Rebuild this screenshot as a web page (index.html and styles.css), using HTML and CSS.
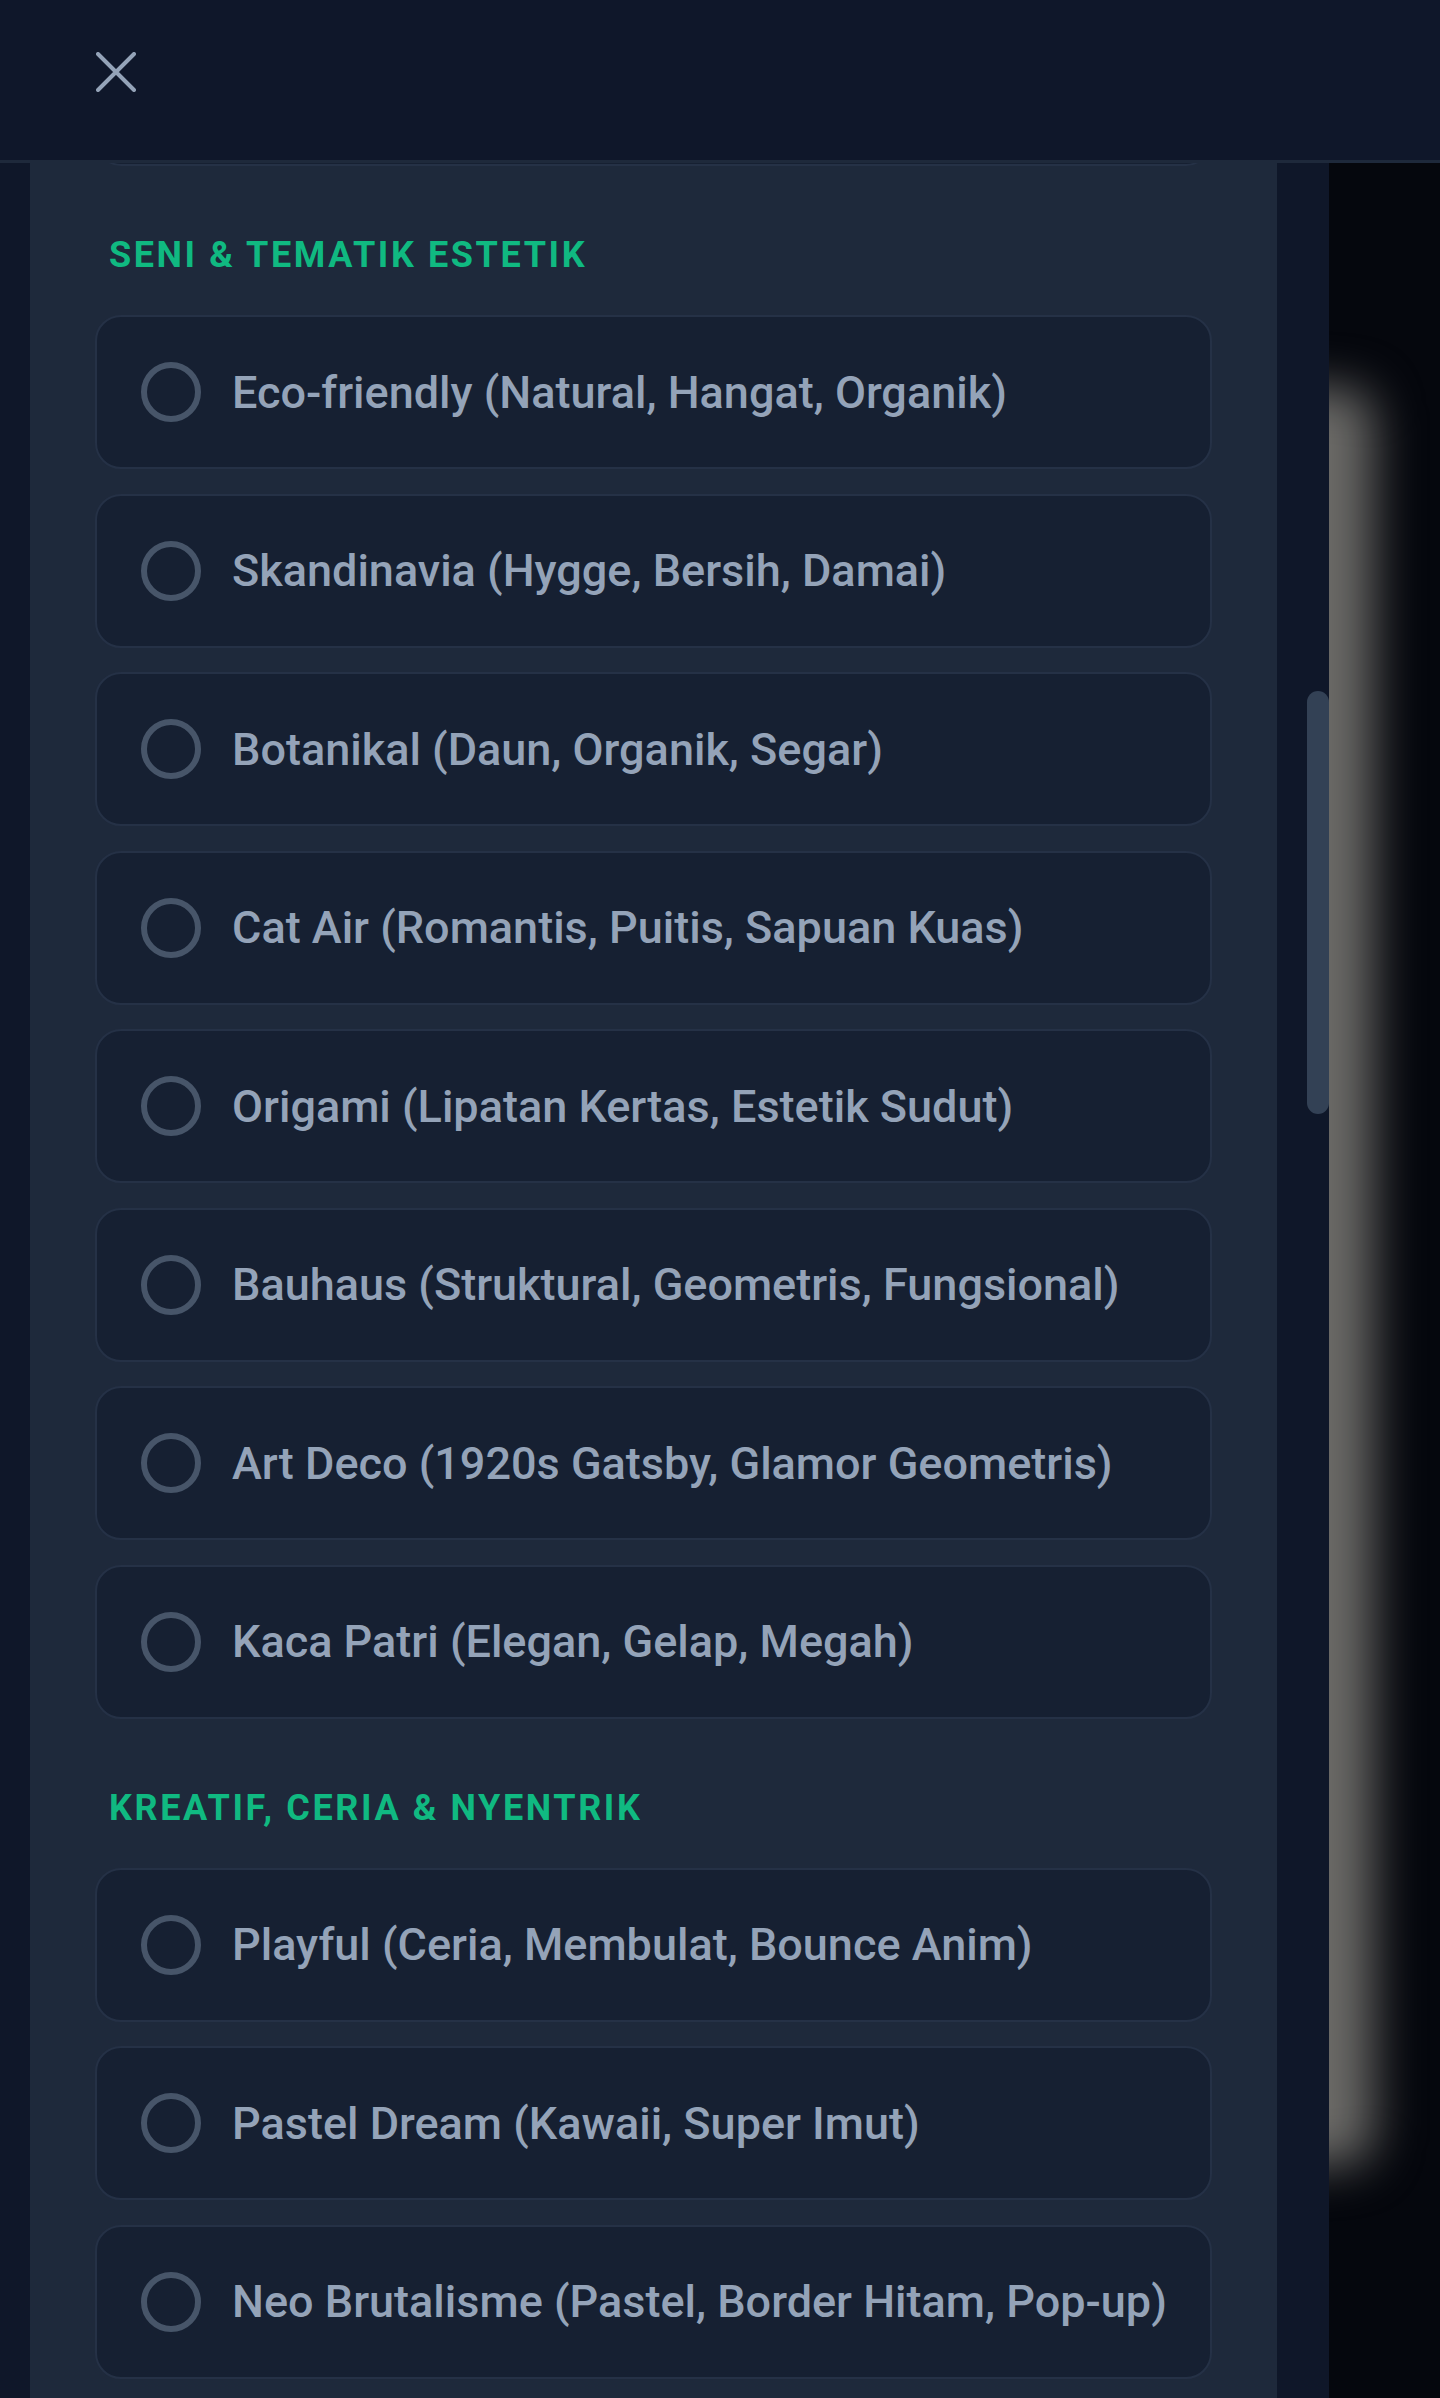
FILE: index.html
```html
<!DOCTYPE html>
<html lang="id">
<head>
    <meta charset="UTF-8">
    <meta name="viewport" content="width=device-width, initial-scale=1.0">
    <title>Pilih Tema</title>
    <link rel="stylesheet" href="styles.css">
</head>
<body>
    <div class="app">
        <header class="topbar">
            <button class="close-btn" aria-label="Tutup">
                <svg viewBox="0 0 40 40" width="40" height="40">
                    <path d="M2 2 L38 38 M38 2 L2 38" fill="none" stroke="currentColor" stroke-width="4" stroke-linecap="round"/>
                </svg>
            </button>
        </header>

        <div class="main">
            <div class="gutter"></div>

            <div class="sheet">
                <!-- list is scrolled: the card above the first heading is cut off -->
                <div class="sheet-list">
                    <div class="option"></div>

                    <h2 class="group-title">Seni &amp; Tematik Estetik</h2>
                    <label class="option"><span class="radio"></span><span class="option-text">Eco-friendly (Natural, Hangat, Organik)</span></label>
                    <label class="option"><span class="radio"></span><span class="option-text">Skandinavia (Hygge, Bersih, Damai)</span></label>
                    <label class="option"><span class="radio"></span><span class="option-text">Botanikal (Daun, Organik, Segar)</span></label>
                    <label class="option"><span class="radio"></span><span class="option-text">Cat Air (Romantis, Puitis, Sapuan Kuas)</span></label>
                    <label class="option"><span class="radio"></span><span class="option-text">Origami (Lipatan Kertas, Estetik Sudut)</span></label>
                    <label class="option"><span class="radio"></span><span class="option-text">Bauhaus (Struktural, Geometris, Fungsional)</span></label>
                    <label class="option"><span class="radio"></span><span class="option-text">Art Deco (1920s Gatsby, Glamor Geometris)</span></label>
                    <label class="option"><span class="radio"></span><span class="option-text">Kaca Patri (Elegan, Gelap, Megah)</span></label>

                    <h2 class="group-title">Kreatif, Ceria &amp; Nyentrik</h2>
                    <label class="option"><span class="radio"></span><span class="option-text">Playful (Ceria, Membulat, Bounce Anim)</span></label>
                    <label class="option"><span class="radio"></span><span class="option-text">Pastel Dream (Kawaii, Super Imut)</span></label>
                    <label class="option"><span class="radio"></span><span class="option-text">Neo Brutalisme (Pastel, Border Hitam, Pop-up)</span></label>
                </div>
            </div>

            <div class="scroll-track">
                <div class="scroll-thumb"></div>
            </div>

            <div class="backdrop">
                <div class="backdrop-glow"></div>
            </div>
        </div>
    </div>
</body>
</html>
```

FILE: styles.css
```css
* {
    box-sizing: border-box;
}

html, body {
    margin: 0;
    height: 100%;
}

body {
    font-family: Roboto, "Noto Sans", Arial, sans-serif;
    background-color: #0f172a;
    color: #94a3b8;
}

.app {
    display: flex;
    flex-direction: column;
    height: 100vh;
    overflow: hidden;
}

/* top bar with the close button */
.topbar {
    flex: none;
    height: 163px;
    background-color: #0f172a;
    border-bottom: 3px solid #1e293b;
    display: flex;
    align-items: flex-start;
    padding: 52px 0 0 96px;
}

.close-btn {
    width: 40px;
    height: 40px;
    padding: 0;
    border: none;
    background: none;
    color: #94a3b8;
    cursor: pointer;
}

.close-btn svg {
    display: block;
}

.main {
    flex: 1;
    min-height: 0;
    display: flex;
}

.gutter {
    width: 30px;
    flex: none;
    background-color: #0f1729;
}

/* the option sheet */
.sheet {
    width: 1247px;
    flex: none;
    background-color: #1e293b;
    overflow: hidden;
    padding: 0 65px;
}

.sheet-list {
    display: flex;
    flex-direction: column;
    margin-top: -151px;
}

.group-title {
    margin: 40.5px 0 36px 14px;
    font-size: 36px;
    line-height: 48px;
    font-weight: 700;
    letter-spacing: 0.072em;
    text-transform: uppercase;
    color: #10b981;
}

.option {
    flex: none;
    display: flex;
    align-items: center;
    gap: 31px;
    height: 154px;
    margin-bottom: 24.5px;
    padding: 0 44px;
    background-color: #162032;
    border: 2px solid #253146;
    border-radius: 26px;
    cursor: pointer;
}

.radio {
    flex: none;
    width: 60px;
    height: 60px;
    border: 6px solid #475569;
    border-radius: 50%;
}

.option-text {
    font-size: 45px;
    font-weight: 500;
    color: #94a3b8;
    white-space: nowrap;
}

/* fake scrollbar next to the sheet */
.scroll-track {
    width: 52px;
    flex: none;
    background-color: #0f1729;
    padding-top: 528px;
    padding-left: 30px;
}

.scroll-thumb {
    width: 22px;
    height: 423px;
    border-radius: 11px;
    background-color: #334155;
}

/* dimmed page behind the sheet */
.backdrop {
    flex: 1;
    position: relative;
    overflow: hidden;
    background-color: #05070d;
}

.backdrop-glow {
    position: absolute;
    left: -80px;
    top: 225px;
    width: 124px;
    height: 1777px;
    border-radius: 30px;
    background-color: #6b6a67;
    filter: blur(24px);
}
```
